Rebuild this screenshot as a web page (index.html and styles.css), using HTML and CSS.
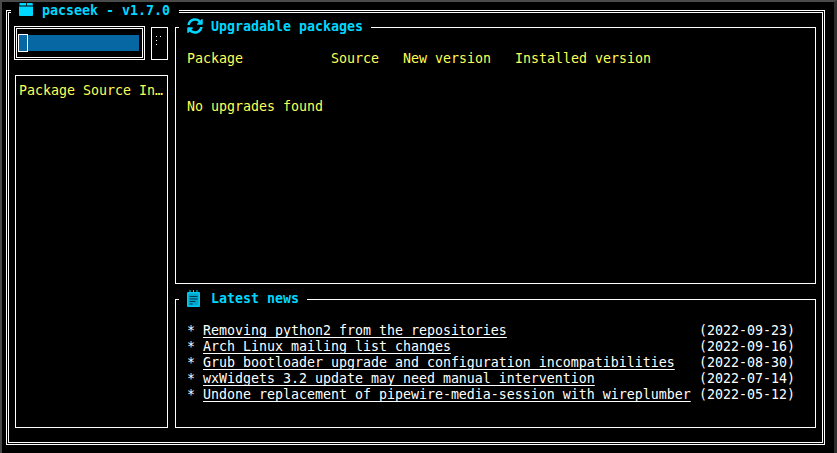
FILE: index.html
```html
<!DOCTYPE html>
<html lang="en">
<head>
<meta charset="utf-8">
<title>pacseek</title>
<link rel="stylesheet" href="styles.css">
</head>
<body>
<div class="screen">
  <main class="frame">
    <h1 class="frame-title">
      <svg class="icon-box" viewBox="0 0 14 13" aria-hidden="true"><path d="M1 0h6v2.600H0.400V1Q0.400 0 1 0zM7.800 0h5q1 0 1 1v1.600H7.800z"/><path d="M0 3.600h14V12q0 1-1 1H1q-1 0-1-1z"/></svg>
      <span class="title-text">pacseek - v1.7.0</span>
    </h1>
    <div class="columns">
      <aside class="sidebar">
        <div class="search-row">
          <div class="search"><div class="search-bar"><span class="caret"></span></div></div>
          <div class="menu-button">
            <svg class="dots" viewBox="0 0 5 9" aria-hidden="true"><rect x="0" y="0" width="1" height="1"/><rect x="4" y="0" width="1" height="1"/><rect x="0" y="4" width="1" height="1"/><rect x="0" y="8" width="1" height="1"/></svg>
          </div>
        </div>
        <div class="source-list">Package Source In…</div>
      </aside>
      <div class="content">
        <section class="panel panel-packages">
          <h2 class="panel-title">
            <svg class="icon-sync" viewBox="0 0 512 512" aria-hidden="true"><path d="M370.72 133.28C339.458 104.008 298.888 87.962 255.848 88c-77.458.068-144.328 53.178-162.791 126.85-1.344 5.363-6.122 9.15-11.651 9.15H24.103c-7.498 0-13.194-6.807-11.807-14.176C33.933 94.924 134.813 8 256 8c66.448 0 126.791 26.136 171.315 68.685L463.03 40.97C478.149 25.851 504 36.559 504 57.941V192c0 13.255-10.745 24-24 24H345.941c-21.382 0-32.09-25.851-16.971-40.971l41.75-41.749zM32 296h134.059c21.382 0 32.09 25.851 16.971 40.971l-41.75 41.75c31.262 29.273 71.835 45.319 114.876 45.28 77.418-.07 144.315-53.144 162.787-126.849 1.344-5.363 6.122-9.15 11.651-9.15h57.304c7.498 0 13.194 6.807 11.807 14.176C478.067 417.076 377.187 504 256 504c-66.448 0-126.791-26.136-171.315-68.685L48.97 471.03C33.851 486.149 8 475.441 8 454.059V320c0-13.255 10.745-24 24-24z"/></svg>
            <span class="title-text">Upgradable packages</span>
          </h2>
          <div class="package-head">
            <span>Package</span><span>Source</span><span>New version</span><span>Installed version</span>
          </div>
          <p class="empty">No upgrades found</p>
        </section>
        <section class="panel panel-news">
          <h2 class="panel-title">
            <svg class="icon-note" viewBox="0 0 13 17" aria-hidden="true">
              <rect class="note-body" x="0" y="2" width="13" height="15" rx="1"/>
              <rect class="note-fill" x="1.500" y="3.500" width="10" height="12"/>
              <path class="note-rings" d="M3 0v3M6.500 0v3M10 0v3"/>
              <path class="note-lines" d="M2.500 6.500h8M2.500 9h8M2.500 11.500h6M2.500 14h3"/>
            </svg>
            <span class="title-text">Latest news</span>
          </h2>
          <ul class="news">
            <li><span class="bullet">*</span><a href="#">Removing python2 from the repositories</a><time>(2022-09-23)</time></li>
            <li><span class="bullet">*</span><a href="#">Arch Linux mailing list changes</a><time>(2022-09-16)</time></li>
            <li><span class="bullet">*</span><a href="#">Grub bootloader upgrade and configuration incompatibilities</a><time>(2022-08-30)</time></li>
            <li><span class="bullet">*</span><a href="#">wxWidgets 3.2 update may need manual intervention</a><time>(2022-07-14)</time></li>
            <li><span class="bullet">*</span><a href="#">Undone replacement of pipewire-media-session with wireplumber</a><time>(2022-05-12)</time></li>
          </ul>
        </section>
      </div>
    </div>
  </main>
</div>
</body>
</html>
```
FILE: styles.css
```css
* { box-sizing: border-box; }

html, body {
  margin: 0;
  height: 100%;
  background: #000;
}

body {
  font-family: "DejaVu Sans Mono", "Liberation Mono", monospace;
  font-size: 13.29px;
  line-height: 16px;
  color: #fff;
  overflow: hidden;
}

.screen {
  width: 837px;
  height: 453px;
  padding: 8px 12px 8px 4px;
  border-top: 2px solid #4a4a4a;
  border-left: 2px solid #4a4a4a;
  border-right: 3px solid #2e2e2e;
  background: #000;
}

.frame {
  position: relative;
  width: 819px;
  height: 435px;
  border: 3px double #fff;
  padding: 13px 6px 14px 5px;
}

.frame-title {
  position: absolute;
  top: -11px;
  left: 2px;
  width: 168px;
  height: 16px;
  margin: 0;
  padding-left: 8px;
  display: flex;
  align-items: flex-start;
  gap: 9px;
  background: #000;
  color: #00d7ff;
  font: inherit;
  font-weight: bold;
}

.title-text { margin-top: 1px; }

.icon-box {
  width: 14px;
  height: 13px;
  margin-top: 1px;
  fill: #00d7ff;
  flex: none;
}

.columns {
  display: grid;
  grid-template-columns: 154px 641px;
  column-gap: 7px;
  height: 100%;
}

.sidebar {
  display: flex;
  flex-direction: column;
  min-height: 0;
}

.search-row {
  display: flex;
  gap: 6px;
  align-items: flex-start;
}

.search {
  width: 131px;
  height: 34px;
  border: 3px double #fff;
  padding: 6px 0 0 1px;
}

.search-bar {
  position: relative;
  width: 121px;
  height: 16px;
  background: #0667a3;
}

.caret {
  position: absolute;
  top: -1px;
  left: 0;
  width: 10px;
  height: 18px;
  border: 1px solid #fff;
  background: #0667a3;
}

.menu-button {
  width: 17px;
  height: 33px;
  margin-top: 1px;
  border: 1px solid #fff;
  padding: 8px 0 0 4px;
}

.dots {
  display: block;
  width: 5px;
  height: 9px;
  fill: #fff;
}

.source-list {
  flex: 1;
  margin: 15px 0 0 1px;
  border: 1px solid #fff;
  padding: 7px 3px;
  color: #ffff55;
  white-space: nowrap;
}

.content {
  display: flex;
  flex-direction: column;
  gap: 15px;
  padding-top: 1px;
}

.panel {
  position: relative;
  border: 1px solid #fff;
  padding: 23px 11px 0;
}

.panel-packages { height: 257px; }
.panel-news { height: 129px; }

.panel-title {
  position: absolute;
  top: -10px;
  left: 3px;
  height: 16px;
  margin: 0;
  padding: 0 8px;
  display: flex;
  align-items: flex-start;
  background: #000;
  color: #00d7ff;
  font: inherit;
  font-weight: bold;
}

.icon-sync {
  width: 16px;
  height: 16px;
  margin-right: 8px;
  fill: #00d7ff;
  flex: none;
}

.icon-note {
  width: 13px;
  height: 17px;
  margin-right: 11px;
  flex: none;
}

.note-body { fill: #00c8ee; }
.note-fill { fill: #00a5cc; }
.note-rings { stroke: #00d7ff; fill: none; }
.note-lines { stroke: #003a4a; fill: none; }

.package-head {
  display: grid;
  grid-template-columns: 144px 72px 112px auto;
  color: #ffff55;
}

.empty {
  margin: 32px 0 0;
  color: #ffff55;
}

.news {
  list-style: none;
  margin: 0;
  padding: 0;
}

.news li {
  display: grid;
  grid-template-columns: 16px 496px auto;
  white-space: nowrap;
}

.news a {
  color: #fff;
  text-decoration: underline;
  text-decoration-thickness: 1px;
  text-decoration-skip-ink: none;
  text-underline-offset: 2px;
}
```
